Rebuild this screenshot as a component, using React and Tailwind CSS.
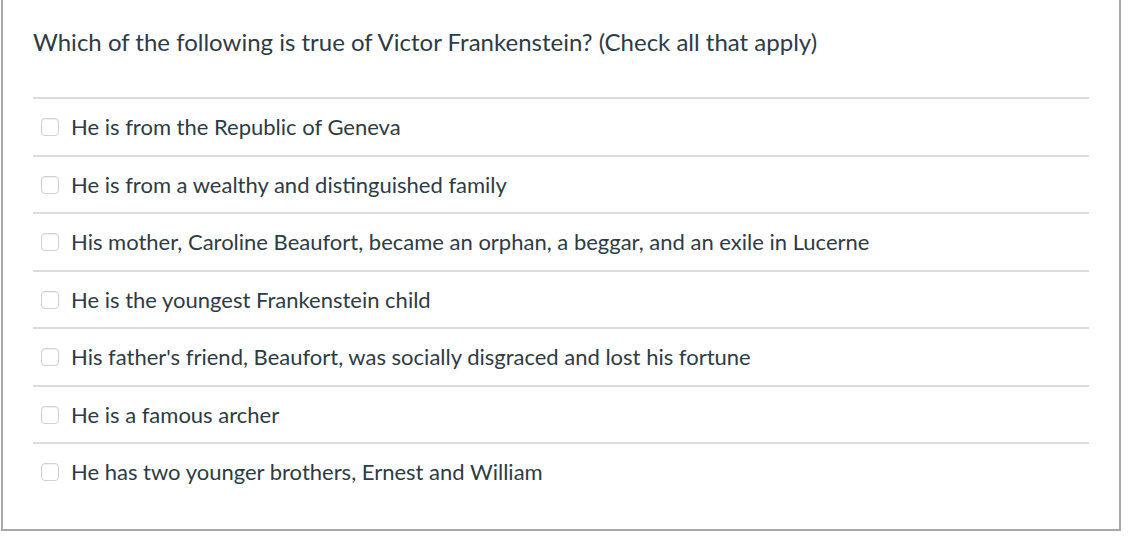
import React from "react";

const answers = [
  "He is from the Republic of Geneva",
  "He is from a wealthy and distinguished family",
  "His mother, Caroline Beaufort, became an orphan, a beggar, and an exile in Lucerne",
  "He is the youngest Frankenstein child",
  "His father's friend, Beaufort, was socially disgraced and lost his fortune",
  "He is a famous archer",
  "He has two younger brothers, Ernest and William",
];

export default function App() {
  return (
    <div className="w-[1134px] h-[538px] bg-white" style={{ fontFamily: "Lato, 'Open Sans', sans-serif" }}>
      <div className="ml-px w-[1120px] h-[531px] border-x-2 border-b-2 border-[#a8a8a8] px-[30px] text-[#2d3b45]">
        {/* Question */}
        <div className="h-[97px] pt-[28px] text-[24px] leading-[28px]">
          Which of the following is true of Victor Frankenstein? (Check all that apply)
        </div>

        {/* Answers */}
        {answers.map((a, i) => (
          <div
            key={a}
            className={
              (i % 2 === 0 ? "h-[58px]" : "h-[57px]") +
              " border-t-2 border-[#dcdcdc] flex items-center pl-2"
            }
          >
            <span className="shrink-0 w-[18px] h-[18px] rounded-[4px] border border-[#d0d0d0] bg-white shadow-[inset_0_1px_1px_rgba(0,0,0,0.06)]" />
            <span className="ml-3 text-[22px] leading-6">{a}</span>
          </div>
        ))}
      </div>
    </div>
  );
}
